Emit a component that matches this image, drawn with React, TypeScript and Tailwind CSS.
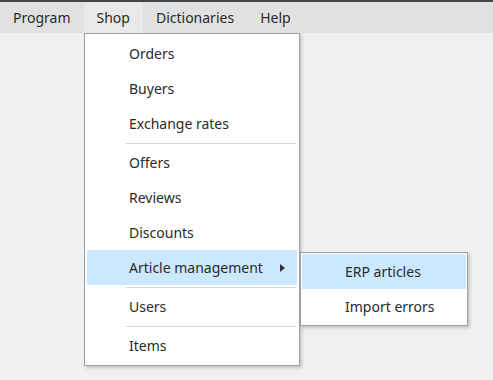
import React from 'react';

const font = { fontFamily: '"Noto Sans", "Open Sans", sans-serif' };

const topMenus = ['Program', 'Shop', 'Dictionaries', 'Help'];

type Entry = { label: string; active?: boolean; sub?: boolean } | 'sep';

const shopEntries: Entry[] = [
    { label: 'Orders' },
    { label: 'Buyers' },
    { label: 'Exchange rates' },
    'sep',
    { label: 'Offers' },
    { label: 'Reviews' },
    { label: 'Discounts' },
    { label: 'Article management', active: true, sub: true },
    'sep',
    { label: 'Users' },
    'sep',
    { label: 'Items' },
];

const App: React.FC = () => {
    return (
        <div className="w-[493px] h-[380px] bg-[#f0f0f0] text-[14px] text-[#2a2a2a] overflow-hidden relative" style={font}>
            <div className="h-[2px] bg-[#474747]"></div>

            {/* Menu bar */}
            <div className="h-[31px] bg-[#e1e1e1] flex items-stretch">
                {topMenus.map(m => (
                    <div
                        key={m}
                        className={`flex items-center px-[13px] pb-[1px] ${m === 'Shop' ? 'bg-[#e9e9e9]' : ''}`}
                    >
                        {m}
                    </div>
                ))}
            </div>

            {/* Shop dropdown */}
            <div className="absolute left-[84px] top-[33px] w-[216px] bg-white border border-[#a0a0a0] py-[2px] px-[2px] shadow-[2px_2px_3px_rgba(0,0,0,0.18)]">
                {shopEntries.map((e, i) =>
                    e === 'sep' ? (
                        <div key={i} className="h-[4px] flex items-center pl-[39px] pr-[1px]">
                            <div className="h-px w-full bg-[#d7d7d7]"></div>
                        </div>
                    ) : (
                        <div
                            key={i}
                            className={`h-[35px] flex items-center pl-[42px] pr-[11px] ${e.active ? 'bg-[#cce8ff]' : ''}`}
                        >
                            <span className="flex-1">{e.label}</span>
                            {e.sub && (
                                <svg width="5" height="8" viewBox="0 0 5 8" className="mr-[1px]">
                                    <path d="M0 0 L5 4 L0 8 Z" fill="#333" />
                                </svg>
                            )}
                        </div>
                    )
                )}

                {/* Submenu */}
                <div className="absolute left-[215px] top-[218px] w-[168px] bg-white border border-[#a0a0a0] p-[1px] shadow-[2px_2px_3px_rgba(0,0,0,0.18)]">
                    <div className="h-[35px] flex items-center pl-[43px] bg-[#cce8ff]">ERP articles</div>
                    <div className="h-[35px] flex items-center pl-[43px]">Import errors</div>
                </div>
            </div>
        </div>
    );
};

export default App;
